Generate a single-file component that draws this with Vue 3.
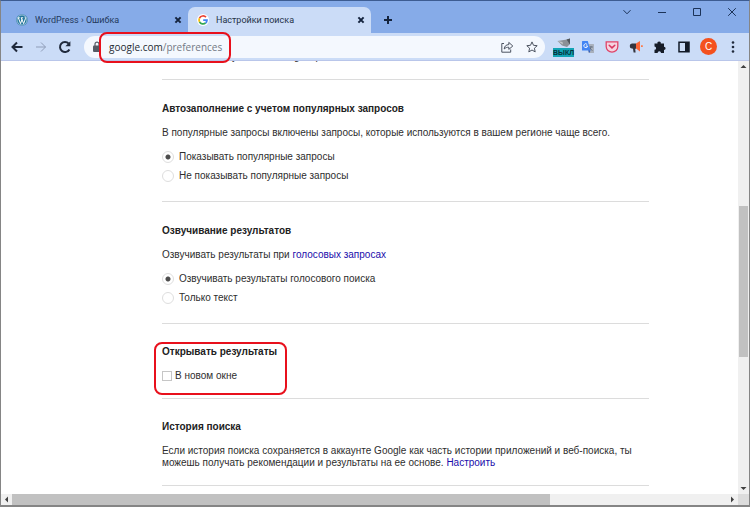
<script setup>
import { ref } from 'vue'

const popular = ref('show')
const voice = ref('speak')
const newWindow = ref(false)
</script>

<template>
  <div class="window">
    <header class="tabs">
      <div class="tab">
        <svg class="fav" viewBox="0 0 12 12" aria-hidden="true">
          <circle cx="6" cy="6" r="5.8" fill="#21759b" />
          <circle cx="6" cy="6" r="5" fill="none" stroke="#e8f2fb" stroke-width=".6" />
          <path d="M1.8 3.8h2M4.8 3.8h2.4M2.4 4l2.2 5.6L6 5.2M5.4 4l2.2 5.6L9.4 4.8Q9.6 3.6 8.8 2.8" fill="none" stroke="#fff" stroke-width="1" />
        </svg>
        <span class="title">WordPress › Ошибка</span>
        <button class="close" aria-label="Закрыть"><svg viewBox="0 0 8 8"><path d="M1.4 1.4l5.2 5.2M6.6 1.4L1.4 6.6" /></svg></button>
      </div>
      <div class="tab active">
        <svg class="fav" viewBox="0 0 12 12" aria-hidden="true">
          <circle cx="6" cy="6" r="6" fill="#fff" />
          <g fill="none" stroke-width="1.7">
            <path d="M9 3.2A4 4 0 0 0 2.5 4.2" stroke="#ea4335" />
            <path d="M2.5 4.2A4 4 0 0 0 2.5 7.8" stroke="#fbbc05" />
            <path d="M2.5 7.8A4 4 0 0 0 8.6 9" stroke="#34a853" />
            <path d="M8.6 9A4 4 0 0 0 10 6.1H6.2" stroke="#4285f4" />
          </g>
        </svg>
        <span class="title">Настройки поиска</span>
        <button class="close" aria-label="Закрыть"><svg viewBox="0 0 8 8"><path d="M1.4 1.4l5.2 5.2M6.6 1.4L1.4 6.6" /></svg></button>
      </div>
      <button class="add" aria-label="Новая вкладка"><svg viewBox="0 0 10 10"><path d="M5 1v8M1 5h8" /></svg></button>
      <div class="controls">
        <button aria-label="Поиск вкладок"><svg viewBox="0 0 10 10"><path d="M1.5 3.2L5 6.8l3.5-3.6" /></svg></button>
        <button aria-label="Свернуть"><svg viewBox="0 0 10 10"><path d="M1 5.5h8" /></svg></button>
        <button aria-label="Развернуть"><svg viewBox="0 0 10 10"><path d="M1.5 1.5h7v7h-7z" /></svg></button>
        <button aria-label="Закрыть окно"><svg viewBox="0 0 10 10"><path d="M1.2 1.2l7.6 7.6M8.8 1.2L1.2 8.8" /></svg></button>
      </div>
    </header>

    <div class="toolbar">
      <nav class="nav">
        <button aria-label="Назад"><svg viewBox="0 0 14 14"><path d="M12.5 7H2.5M7 2.5L2.5 7 7 11.5" /></svg></button>
        <button class="dim" aria-label="Вперёд"><svg viewBox="0 0 14 14"><path d="M2 7h9.5M7 2.5L11.5 7 7 11.5" /></svg></button>
        <button aria-label="Обновить"><svg viewBox="0 0 14 14"><path d="M11.4 9.4A5 5 0 1 1 10.7 3.6" /><path d="M12.4 1.2v5H7.4z" fill="#202a3c" stroke="none" /></svg></button>
      </nav>
      <div class="omnibox">
        <svg class="lock" viewBox="0 0 10 12" aria-hidden="true"><rect x="1" y="4.6" width="8" height="6.4" rx="1" fill="#555b66" /><path d="M3 5V3.2a2 2 0 0 1 4 0V5" fill="none" stroke="#555b66" stroke-width="1.2" /></svg>
        <div class="url" role="textbox" aria-label="Адрес">google.com<span>/preferences</span>
          <i class="mark mark-url"></i>
        </div>
        <button aria-label="Поделиться"><svg viewBox="0 0 14 14"><path d="M4 3.5H1.8v8.7h8.9V9.5M4.2 9c.3-3 2-4.3 4.6-4.4V2.4L12.8 6 8.8 9.4V7.2C7 7.2 5.5 7.7 4.2 9z" /></svg></button>
        <button aria-label="Добавить в закладки"><svg viewBox="0 0 14 14"><path d="M7 1.9l1.5 3.4 3.7.4-2.8 2.5.8 3.7L7 10l-3.2 1.9.8-3.7-2.8-2.5 3.7-.4z" /></svg></button>
      </div>
      <div class="ext">
        <button class="wide" aria-label="Расширение">
          <svg viewBox="0 0 22 18"><path d="M4.5 3L14 1.500l3-1v5.500l-3 3-5-1.500z" fill="#8b9096" /><path d="M4.5 3l5 1 .5 2.500z" fill="#c2c6ca" /><path d="M13.500 1.500l3.500-1v6z" fill="#50565c" /></svg>
          <b class="badge">ВЫКЛ</b>
        </button>
        <button aria-label="Переводчик"><svg viewBox="0 0 14 14"><path d="M6 4h6.5q.5 0 .5.5v8q0 .5-.5.5H7.5z" fill="#a9b1bd" /><path d="M8 7h4M10 6v1q-.5 2.5-2 3.5M9 8q1 2 2.5 2.5" fill="none" stroke="#5f6b7a" stroke-width=".8" /><path d="M1.5 1h5.3l2.7 9.5h-8q-.5 0-.5-.5V1.500q0-.5.5-.5z" fill="#4285f4" /><path d="M6.2 4.5A1.9 1.9 0 1 0 6.6 6H4.9" fill="none" stroke="#fff" stroke-width=".9" /><path d="M7.3 10.5h2.2L8.2 13z" fill="#2859c0" /></svg></button>
        <button aria-label="Pocket"><svg viewBox="0 0 14 14"><path d="M1.2 1.8h11.6v4.7a5.8 5.6 0 0 1-11.6 0z" fill="#f5d3e0" stroke="#df4468" stroke-width="1.3" /><path d="M4.2 5.2L7 7.9l2.8-2.7" fill="none" stroke="#d93660" stroke-width="1.5" stroke-linecap="round" /></svg></button>
        <button aria-label="Рупор"><svg viewBox="0 0 14 14"><path d="M7 3.6H3A2 2.2 0 0 0 3 8.6l1 .1.6 3.8h2l-.4-3.8H7z" fill="#34343f" /><path d="M7 3.6l4-2.6v10.4L7 8.6z" fill="#fa6538" /><path d="M12 5.2h1.8v1.7H12z" fill="#ff7a45" /></svg></button>
        <button aria-label="Расширения"><svg viewBox="0 0 14 14"><path d="M1.5 3.5h3a1.7 1.7 0 1 1 3.3 0H11v3.2a1.6 1.6 0 1 1 0 3.2V13H8a1.7 1.7 0 0 0-3.4 0H1.5V9.8a1.6 1.6 0 0 0 0-3.2z" fill="#161c28" /></svg></button>
        <button aria-label="Боковая панель"><svg viewBox="0 0 14 14"><path d="M2 2.3h10v9.4H2z" fill="none" stroke="#121a28" stroke-width="1.5" /><path d="M8 2h4v10H8z" fill="#121a28" /></svg></button>
        <button class="avatar" aria-label="Профиль">С</button>
        <button aria-label="Меню"><svg viewBox="0 0 14 14"><g fill="#202a3c"><circle cx="7" cy="2.5" r="1.3" /><circle cx="7" cy="7" r="1.3" /><circle cx="7" cy="11.5" r="1.3" /></g></svg></button>
      </div>
    </div>

    <div class="view">
      <main class="page">
        <div class="cut">Для показа результатов Google применить</div>
        <section class="choices">
          <h2>Автозаполнение с учетом популярных запросов</h2>
          <p>В популярные запросы включены запросы, которые используются в вашем регионе чаще всего.</p>
          <div class="options">
            <label><input v-model="popular" type="radio" name="popular" value="show">Показывать популярные запросы</label>
            <label><input v-model="popular" type="radio" name="popular" value="hide">Не показывать популярные запросы</label>
          </div>
        </section>
        <section class="choices">
          <h2>Озвучивание результатов</h2>
          <p>Озвучивать результаты при <a href="#">голосовых запросах</a></p>
          <div class="options">
            <label><input v-model="voice" type="radio" name="voice" value="speak">Озвучивать результаты голосового поиска</label>
            <label><input v-model="voice" type="radio" name="voice" value="text">Только текст</label>
          </div>
        </section>
        <section class="marked">
          <h2>Открывать результаты</h2>
          <div class="options">
            <label class="check"><input v-model="newWindow" type="checkbox">В новом окне</label>
          </div>
          <i class="mark mark-window"></i>
        </section>
        <section>
          <h2>История поиска</h2>
          <p>Если история поиска сохраняется в аккаунте Google как часть истории приложений и веб-поиска, ты можешь получать рекомендации и результаты на ее основе. <a href="#">Настроить</a></p>
        </section>
        <section></section>
      </main>
      <div class="vbar">
        <svg viewBox="0 0 11 11"><path d="M2.5 7L5.5 4l3 3z" /></svg>
        <div class="track"><div class="gap"></div><div class="thumb"></div><div class="rest"></div></div>
        <svg viewBox="0 0 11 11"><path d="M2.5 4L5.5 7l3-3z" /></svg>
      </div>
      <div class="hbar">
        <svg viewBox="0 0 11 11"><path d="M7 2.5L4 5.5l3 3z" /></svg>
        <div class="track"><div class="thumb"></div><div class="rest"></div></div>
        <svg viewBox="0 0 11 11"><path d="M4 2.5L7 5.5l-3 3z" /></svg>
      </div>
      <div class="corner"></div>
    </div>
  </div>
</template>

<style>
body { margin: 0; }
</style>

<style scoped>
.window {
  box-sizing: border-box;
  height: 100vh;
  display: flex;
  flex-direction: column;
  border: 1px solid #858585;
  border-top-color: #3d5c91;
  border-bottom-width: 2px;
  background: #fff;
  font-family: "Liberation Sans", Arial, sans-serif;
  font-size: 10px;
  line-height: 12px;
  color: #2e2e2e;
}
button {
  border: 0;
  padding: 0;
  background: none;
  font: inherit;
  display: flex;
  align-items: center;
  justify-content: center;
}
svg { display: block; flex: none; }
.tabs {
  flex: none;
  height: 32px;
  display: flex;
  align-items: flex-end;
  background: #86abe8;
  font-family: Roboto, "Noto Sans", sans-serif;
  font-size: 9px;
}
.tab {
  box-sizing: border-box;
  width: 183px;
  height: 26px;
  margin-left: 4px;
  padding: 0 6px 0 11px;
  display: flex;
  align-items: center;
  gap: 7px;
  color: #23395c;
}
.tab.active {
  margin-left: 0;
  background: #cbdcf7;
  border-radius: 7px 7px 0 0;
  color: #253247;
  padding-left: 9px;
}
.fav { width: 12px; height: 12px; }
.title { flex: 1; white-space: nowrap; }
.close svg { width: 8px; height: 8px; fill: none; stroke: #14233d; stroke-width: 2; }
.add { width: 34px; height: 26px; }
.add svg { width: 10px; height: 10px; fill: none; stroke: #14233d; stroke-width: 2; }
.controls { margin-left: auto; align-self: flex-start; display: flex; }
.controls button { width: 35px; height: 22px; }
.controls svg { width: 10px; height: 10px; fill: none; stroke: #1c3358; stroke-width: 1; }
.toolbar {
  flex: none;
  box-sizing: border-box;
  height: 28px;
  padding: 0 4px;
  display: flex;
  align-items: center;
  gap: 7px;
  background: #cbdcf7;
  border-bottom: 1px solid #b9c6ea;
}
.nav { display: flex; }
.nav button { width: 24px; height: 24px; }
.nav svg { width: 14px; height: 14px; fill: none; stroke: #202a3c; stroke-width: 2; }
.nav .dim svg { stroke: #8f9db8; stroke-width: 1; }
.omnibox {
  flex: 1;
  height: 22px;
  padding: 0 6px 0 8px;
  display: flex;
  align-items: center;
  gap: 11px;
  border-radius: 11px;
  background: #f4f8fe;
}
.omnibox button svg { width: 14px; height: 14px; fill: none; stroke: #4c5360; stroke-width: 1; }
.lock { width: 10px; height: 12px; }
.url {
  flex: 1;
  position: relative;
  margin-left: -4px;
  font-family: "Open Sans", "Noto Sans", sans-serif;
  color: #252a33;
}
.url span { color: #737985; }
.ext { display: flex; align-items: center; }
.ext button { width: 24px; height: 22px; }
.ext svg { width: 14px; height: 14px; }
.ext .wide { position: relative; }
.ext .wide svg { width: 22px; height: 18px; }
.badge {
  position: absolute;
  left: 1px;
  bottom: 1px;
  width: 21px;
  height: 9px;
  background: #12a3b4;
  color: #08313a;
  font-size: 7px;
  line-height: 9px;
  text-align: center;
}
.ext .avatar {
  width: 17px;
  height: 17px;
  margin: 0 4px;
  border-radius: 50%;
  background: #f4511e;
  color: #fff;
}
.view {
  flex: 1;
  min-height: 0;
  display: grid;
  grid-template-columns: minmax(0, 1fr) 11px;
  grid-template-rows: minmax(0, 1fr) 11px;
}
.page { overflow: hidden; padding: 0 89px 0 161px; }
.cut { height: 18px; margin-top: -10px; padding-bottom: 10px; }
section {
  border-top: 1px solid #dcdcdc;
  padding: 22px 0 16px;
  display: flex;
  flex-direction: column;
  gap: 12px;
}
.choices { padding: 23px 0 19px; }
.marked { position: relative; }
h2 { margin: 0; font-size: 10px; line-height: 12px; font-weight: bold; color: #222; }
p { margin: 0; }
a { color: #1a0dab; text-decoration: none; }
.options { display: flex; flex-direction: column; gap: 7px; }
label { display: flex; align-items: center; gap: 5px; height: 12px; }
label.check { gap: 3px; }
input {
  appearance: none;
  box-sizing: border-box;
  flex: none;
  margin: 0;
  width: 12px;
  height: 12px;
  border: 1px solid #dedede;
  background: #fff;
}
input[type="radio"] { border-radius: 50%; }
input[type="radio"]:checked { background: radial-gradient(circle, #4d4d4d 0 2px, #fff 3px); }
input[type="checkbox"] { width: 10px; height: 10px; border-color: #c6c6c6; }
input[type="checkbox"]:checked { background: #4d4d4d; }
.mark {
  position: absolute;
  box-sizing: border-box;
  border: 2px solid #e8101c;
  border-radius: 8px;
  pointer-events: none;
}
.mark-url { left: -10px; top: -9px; width: 132px; height: 31px; }
.mark-window { left: -8px; top: 18px; width: 133px; height: 53px; }
.vbar, .hbar { display: flex; background: #f0f0f0; }
.vbar { flex-direction: column; }
.vbar svg, .hbar svg { width: 11px; height: 11px; fill: #404040; }
.track { flex: 1; display: flex; min-width: 0; min-height: 0; }
.vbar .track { flex-direction: column; }
.vbar .gap { flex: 134; }
.vbar .thumb { flex: 151; margin: 0 1px; background: #c1c1c1; }
.vbar .rest { flex: 126; }
.hbar .thumb { flex: 539; background: #c1c1c1; }
.hbar .rest { flex: 177; }
.corner { background: #dcdcdc; }
</style>
